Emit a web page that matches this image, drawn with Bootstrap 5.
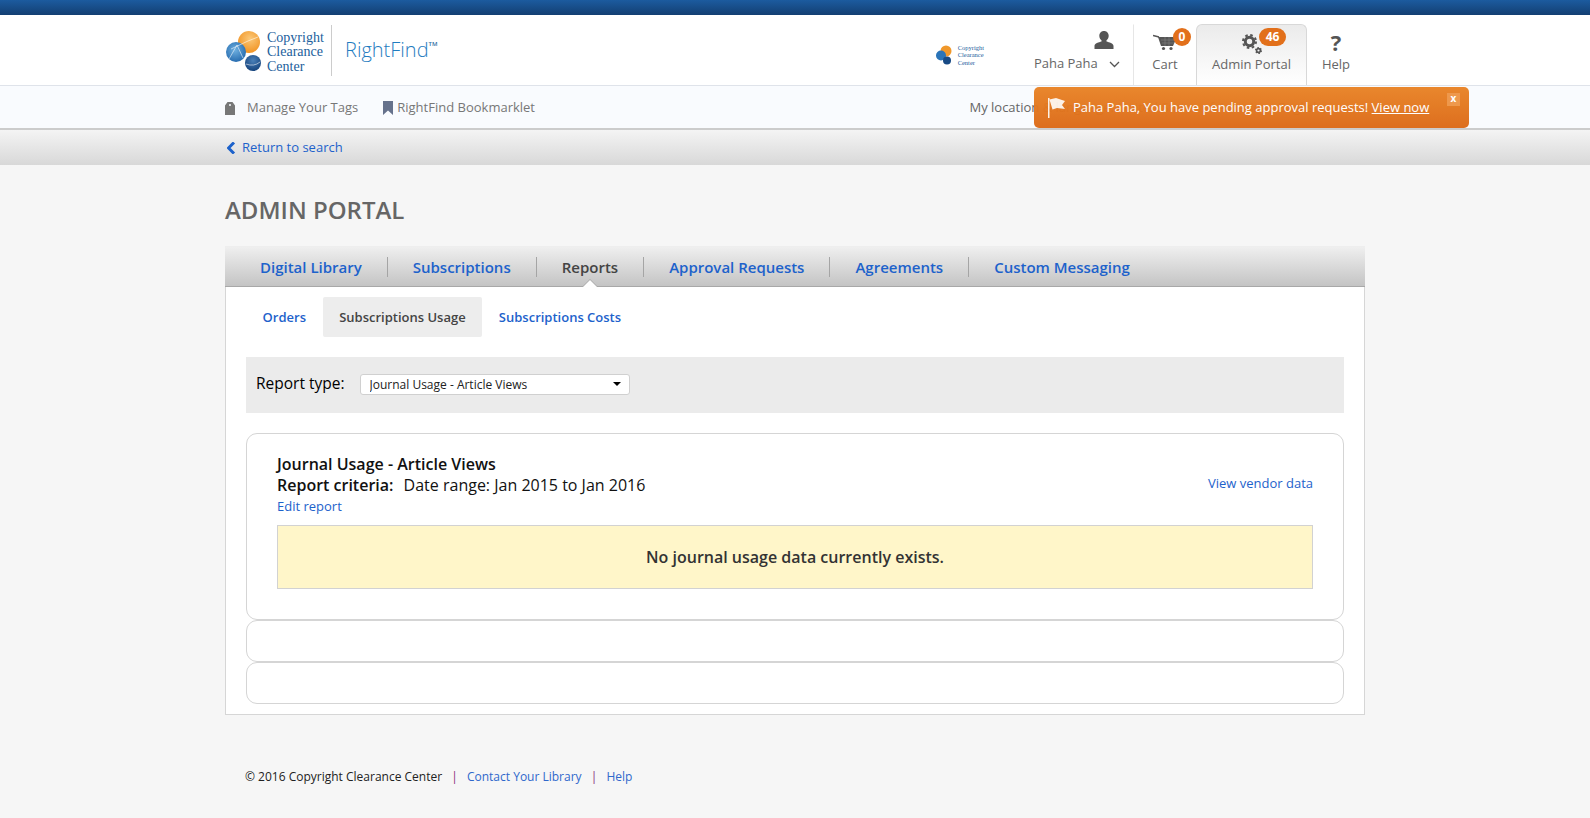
<!DOCTYPE html>
<html lang="en">
<head>
  <meta charset="UTF-8">
  <title>Admin Portal - RightFind</title>
  <meta name="viewport" content="width=device-width, initial-scale=1">
  <link href="https://cdn.jsdelivr.net/npm/bootstrap@5.3.0/dist/css/bootstrap.min.css" rel="stylesheet">
  <style>
    body {
      background: #f6f6f6;
      font-family: "Open Sans", "Noto Sans", sans-serif;
      font-size: 13px;
      color: #333;
      min-height: 818px;
    }
    a { color: #1d62cb; text-decoration: none; }
    .page-wrap { width: 1140px; margin: 0 auto; }
    .top-strip {
      height: 15px;
      background: linear-gradient(to bottom, #1c5b9f, #133f72);
    }
    .site-header {
      background: #fff;
      height: 71px;
      border-bottom: 1px solid #dfe3ea;
    }
    .logo-text {
      font-family: "Liberation Serif", serif;
      font-size: 14px;
      line-height: 14.5px;
      color: #22609c;
      width: 62px;
      margin-top: 5px;
    }
    .logo-split {
      height: 51px;
      margin: 0 13px 0 2px;
      border-left: 1px solid #ccc;
    }
    .brand-name {
      font-size: 20px;
      font-weight: 300;
      color: #1f7cc0;
      line-height: 1;
    }
    .brand-name sup { font-size: 6px; font-weight: 600; top: -1.9em; color: #2f6fa5; }
    .mini-logo { margin-right: 36px; margin-top: 10px; }
    .mini-logo-text {
      font-family: "Liberation Serif", serif;
      font-size: 6.5px;
      line-height: 7.5px;
      color: #22609c;
    }
    .head-item {
      position: relative;
      height: 61px;
      padding-top: 9px;
      text-align: center;
      color: #666;
      font-size: 13px;
      border: 1px solid transparent;
      border-bottom: 0;
    }
    .head-item svg { display: block; margin: 0 auto; }
    .head-user { width: 114px; padding-top: 6px; border-right-color: #e6e6e6; }
    .head-item svg.user-icon { margin: 0 0 5px 73px; }
    .head-item svg.user-caret { display: inline-block; margin-left: 8px; }
    .head-cart { width: 62px; }
    .head-admin {
      width: 111px;
      background: linear-gradient(to bottom, #ebebeb, #fff);
      border-color: #d8d8d8;
      border-radius: 6px 6px 0 0;
    }
    .head-help { width: 58px; }
    .head-help .qmark {
      display: block;
      height: 20px;
      font-size: 22px;
      font-weight: 700;
      line-height: 17px;
      color: #555;
    }
    .head-label { display: block; margin-top: 1px; }
    .count-pill {
      position: absolute;
      top: 3px;
      background: #e2701b;
      color: #fff;
      font-size: 12px;
      font-weight: 700;
      line-height: 18px;
      height: 18px;
      min-width: 18px;
      border-radius: 9px;
      text-align: center;
      padding: 0 2px;
    }
    .sub-header {
      background: #f9fbfe;
      height: 44px;
      padding-top: 1px;
      border-bottom: 2px solid #ccc;
      color: #777;
    }
    .sub-header a { color: #777; }
    .tags-link { margin-right: 25px; }
    .location-text { color: #666; margin-left: auto; padding-right: 44px; white-space: nowrap; }
    .pending-note {
      position: absolute;
      left: 809px;
      top: 0;
      width: 435px;
      height: 41px;
      padding-left: 14px;
      background: linear-gradient(to bottom, #e98427, #dd6a17);
      opacity: .97;
      border-radius: 5px;
      color: #fff;
      font-size: 13px;
    }
    .pending-note a { color: #fff; text-decoration: underline; }
    .note-close {
      position: absolute;
      right: 9px;
      top: 6px;
      width: 13px;
      height: 13px;
      background: #ee9547;
      font-size: 10px;
      line-height: 11px;
      text-align: center;
      font-weight: 700;
    }
    .return-bar {
      height: 35px;
      background: linear-gradient(to bottom, #f4f4f4, #d8d8d8);
    }
    .back-link { margin-left: 2px; }
    .back-link svg { margin-right: 6px; }
    .page-title {
      font-size: 24px;
      font-weight: 600;
      color: #666;
      margin: 31px 0 22px;
      line-height: 28px;
    }
    .portal-panel {
      background: #fff;
      border: 1px solid #d6d6d6;
      border-top: 0;
      height: 469px;
    }
    .main-tabs {
      height: 41px;
      margin: 0 -1px;
      padding-left: 10px;
      border-top: 1px solid #eee;
      border-bottom: 1px solid #a8a8a8;
      background: linear-gradient(to bottom, #efefef, #c4c4c4);
    }
    .main-tabs .nav-link {
      position: relative;
      padding: 0 25px;
      font-size: 15px;
      font-weight: 600;
      line-height: 20px;
      color: #1d62cb;
      border-left: 1px solid #a5a5a5;
    }
    .main-tabs .nav-item:first-child .nav-link { border-left: 0; }
    .main-tabs .nav-link.active { color: #444; background: none; }
    .main-tabs .nav-link.active::before,
    .main-tabs .nav-link.active::after {
      content: "";
      position: absolute;
      left: 50%;
      margin-left: -8px;
      border-left: 8px solid transparent;
      border-right: 8px solid transparent;
      border-bottom: 8px solid #a8a8a8;
    }
    .main-tabs .nav-link.active::before { bottom: -10px; }
    .main-tabs .nav-link.active::after { bottom: -11px; border-bottom-color: #fff; }
    .sub-tabs { margin: 10px 20px 20px; }
    .sub-tabs .nav-link {
      padding: 0 16.6px;
      height: 40px;
      line-height: 40px;
      font-size: 13px;
      font-weight: 600;
      color: #1d62cb;
      border-radius: 2px;
    }
    .sub-tabs .nav-link.active { background: #ededed; color: #444; }
    .filter-band {
      margin: 0 20px 20px;
      height: 56px;
      padding: 0 0 2px 10px;
      background: #ebebeb;
      color: #000;
      font-size: 15.5px;
    }
    .filter-band label { margin-right: 15px; }
    .filter-band .form-select {
      width: 270px;
      height: 21px;
      padding: 0 8px 0 9px;
      font-size: 12px;
      line-height: 19px;
      color: #222;
      border-color: #d0d0d0;
      border-radius: 3px;
      background-size: 8px 4px;
      background-position: right 8px center;
      background-image: url("data:image/svg+xml,%3csvg xmlns='http://www.w3.org/2000/svg' viewBox='0 0 8 4'%3e%3cpath d='M0 0h8L4 4z' fill='%23000'/%3e%3c/svg%3e");
    }
    .report-box {
      margin: 0 20px;
      border: 1px solid #d5d5d5;
      border-radius: 11px;
      height: 42px;
    }
    .report-box.report-open {
      height: 187px;
      padding: 20px 30px 0;
      color: #111;
    }
    .report-name { font-size: 16px; font-weight: 600; line-height: 21px; }
    .report-criteria { font-size: 16px; line-height: 21px; }
    .report-criteria b { font-weight: 600; margin-right: 6px; }
    .report-edit { display: block; line-height: 21px; margin-bottom: 8px; }
    .vendor-link { margin-bottom: 3px; }
    .empty-note {
      height: 64px;
      line-height: 62px;
      background: #fff6c9;
      border: 1px solid #d2d2d2;
      text-align: center;
      font-size: 16px;
      font-weight: 600;
      color: #333;
    }
    .site-footer { margin-top: 53px; padding-left: 20px; font-size: 12px; color: #222; }
    .site-footer a { color: #2f68cc; }
    .site-footer .foot-sep { color: #8a2a7c; margin: 0 6px; }
  </style>
</head>
<body>
  <div class="top-strip"></div>

  <header class="site-header">
    <div class="page-wrap d-flex align-items-center h-100">
      <div class="d-flex align-items-center">
        <svg width="42" height="44" viewBox="0 0 42 44">
          <defs>
            <radialGradient id="sunBall" cx=".55" cy=".35" r=".7"><stop offset="0" stop-color="#fbc878"/><stop offset="1" stop-color="#f08f1c"/></radialGradient>
            <radialGradient id="skyBall" cx=".45" cy=".4" r=".7"><stop offset="0" stop-color="#6fb0e0"/><stop offset="1" stop-color="#1c62a8"/></radialGradient>
            <radialGradient id="navyBall" cx=".5" cy=".35" r=".7"><stop offset="0" stop-color="#4a80b8"/><stop offset="1" stop-color="#123f78"/></radialGradient>
          </defs>
          <circle cx="24" cy="14" r="11" fill="url(#sunBall)"/>
          <circle cx="11" cy="24" r="10" fill="url(#skyBall)"/>
          <circle cx="28" cy="35" r="8" fill="url(#navyBall)"/>
          <path d="M4 31 12 17l6 13M6 21l17-8 10-4M21 36q8 3 14-2" fill="none" stroke="#fff" stroke-width=".7" opacity=".8"/>
        </svg>
        <div class="logo-text">Copyright Clearance Center</div>
        <div class="logo-split"></div>
        <div class="brand-name">RightFind<sup>TM</sup></div>
      </div>

      <div class="d-flex align-items-end ms-auto h-100">
        <div class="mini-logo d-flex align-items-center align-self-center gap-1">
          <svg width="19" height="22" viewBox="0 0 19 22">
            <circle cx="11" cy="7" r="5.500" fill="#f0982b"/>
            <circle cx="6" cy="11.500" r="5" fill="#2a74b8"/>
            <circle cx="12" cy="16.500" r="4" fill="#174a85"/>
          </svg>
          <div class="mini-logo-text">Copyright<br>Clearance<br>Center</div>
        </div>
        <div class="head-item head-user">
          <svg class="user-icon" width="20" height="18" viewBox="0 0 20 18"><path d="M10 0c3 0 4.700 2.200 4.700 4.800 0 2-1 3.600-2.200 4.500v1.200c2.600.8 7 1.800 7 4.500V18H.5v-3c0-2.700 4.400-3.700 7-4.500V9.300C6.300 8.400 5.300 6.800 5.300 4.800 5.300 2.200 7 0 10 0z" fill="#555"/></svg>
          <span>Paha Paha</span>
          <svg class="user-caret" width="11" height="7" viewBox="0 0 11 7"><path d="M1 1l4.500 4.500L10 1" fill="none" stroke="#555" stroke-width="1.300"/></svg>
        </div>
        <div class="head-item head-cart">
          <svg width="24" height="20" viewBox="0 0 24 20">
            <path d="M0 1.500 6 3" fill="none" stroke="#555" stroke-width="1.600"/>
            <path d="M5 3h19l-4 9H8z" fill="#555"/>
            <path d="M8 6h14M9 9h12M12 3v9M16 3v9" fill="none" stroke="#888" stroke-width=".5"/>
            <circle cx="10.500" cy="14.500" r="1.600" fill="#555"/>
            <circle cx="18" cy="14.500" r="1.600" fill="#555"/>
          </svg>
          <span class="head-label">Cart</span>
          <span class="count-pill" style="left:38px">0</span>
        </div>
        <div class="head-item head-admin">
          <svg width="20" height="20" viewBox="0 0 20 20" fill="none" stroke="#555">
            <circle cx="7.500" cy="7.500" r="4.200" stroke-width="3"/>
            <circle cx="7.500" cy="7.500" r="6.500" stroke-width="2" stroke-dasharray="2.550 2.550"/>
            <circle cx="16.500" cy="16.500" r="1.900" stroke-width="1.600"/>
            <circle cx="16.500" cy="16.500" r="3" stroke-width="1.100" stroke-dasharray="1.570 1.570"/>
          </svg>
          <span class="head-label">Admin Portal</span>
          <span class="count-pill" style="left:62px;min-width:27px">46</span>
        </div>
        <div class="head-item head-help">
          <span class="qmark">?</span>
          <span class="head-label">Help</span>
        </div>
      </div>
    </div>
  </header>

  <div class="sub-header">
    <div class="page-wrap d-flex align-items-center h-100 position-relative">
      <a href="#" class="tags-link d-flex align-items-center">
        <svg width="10" height="14" viewBox="0 0 10 14" class="me-2"><path d="M2.500 1h5L10 4.500V14H0V4.500zM5 3a1 1 0 1 0 0 2 1 1 0 0 0 0-2z" fill="#777" fill-rule="evenodd"/></svg>
        <span class="ms-1">Manage Your Tags</span>
      </a>
      <a href="#" class="d-flex align-items-center">
        <svg width="10" height="14" viewBox="0 0 10 14" class="me-1"><path d="M0 0h10v14L5 9.500 0 14z" fill="#66728c"/></svg>
        <span>RightFind Bookmarklet</span>
      </a>
      <span class="location-text">My location &amp; language: United States of America - English</span>
      <div class="pending-note d-flex align-items-center">
        <svg width="17" height="20" viewBox="0 0 17 20" class="me-2"><path d="M0 0h1.500v20H0zM1.500 1.500 8 0l9 3-3 4 3 4-8-1-4.500 1.500z" fill="#fdf1e6"/></svg>
        <span>Paha Paha, You have pending approval requests!&nbsp;<a href="#">View now</a></span>
        <span class="note-close">x</span>
      </div>
    </div>
  </div>

  <div class="return-bar">
    <div class="page-wrap d-flex align-items-center h-100">
      <a href="#" class="back-link d-flex align-items-center">
        <svg width="9" height="12" viewBox="0 0 9 12"><path d="M7 .5 1.500 6 7 11.500" fill="none" stroke="#1d62cb" stroke-width="3"/></svg>
        <span>Return to search</span>
      </a>
    </div>
  </div>

  <main class="page-wrap">
    <h1 class="page-title">ADMIN PORTAL</h1>

    <div class="portal-panel">
      <ul class="nav main-tabs align-items-center">
        <li class="nav-item"><a class="nav-link" href="#">Digital Library</a></li>
        <li class="nav-item"><a class="nav-link" href="#">Subscriptions</a></li>
        <li class="nav-item"><a class="nav-link active" href="#">Reports</a></li>
        <li class="nav-item"><a class="nav-link" href="#">Approval Requests</a></li>
        <li class="nav-item"><a class="nav-link" href="#">Agreements</a></li>
        <li class="nav-item"><a class="nav-link" href="#">Custom Messaging</a></li>
      </ul>

      <ul class="nav sub-tabs">
        <li class="nav-item"><a class="nav-link" href="#">Orders</a></li>
        <li class="nav-item"><a class="nav-link active" href="#">Subscriptions Usage</a></li>
        <li class="nav-item"><a class="nav-link" href="#">Subscriptions Costs</a></li>
      </ul>

      <div class="filter-band d-flex align-items-center">
        <label for="reportType">Report type:</label>
        <select id="reportType" class="form-select">
          <option>Journal Usage - Article Views</option>
        </select>
      </div>

      <div class="report-box report-open">
        <div class="d-flex justify-content-between align-items-end">
          <div>
            <div class="report-name">Journal Usage - Article Views</div>
            <div class="report-criteria"><b>Report criteria:</b> Date range: Jan 2015 to Jan 2016</div>
          </div>
          <a href="#" class="vendor-link">View vendor data</a>
        </div>
        <a href="#" class="report-edit">Edit report</a>
        <div class="empty-note">No journal usage data currently exists.</div>
      </div>
      <div class="report-box"></div>
      <div class="report-box"></div>
    </div>

    <footer class="site-footer">
      <span>&copy; 2016 Copyright Clearance Center</span>
      <span class="foot-sep">|</span>
      <a href="#">Contact Your Library</a>
      <span class="foot-sep">|</span>
      <a href="#">Help</a>
    </footer>
  </main>

  <script src="https://cdn.jsdelivr.net/npm/bootstrap@5.3.0/dist/js/bootstrap.bundle.min.js"></script>
</body>
</html>
